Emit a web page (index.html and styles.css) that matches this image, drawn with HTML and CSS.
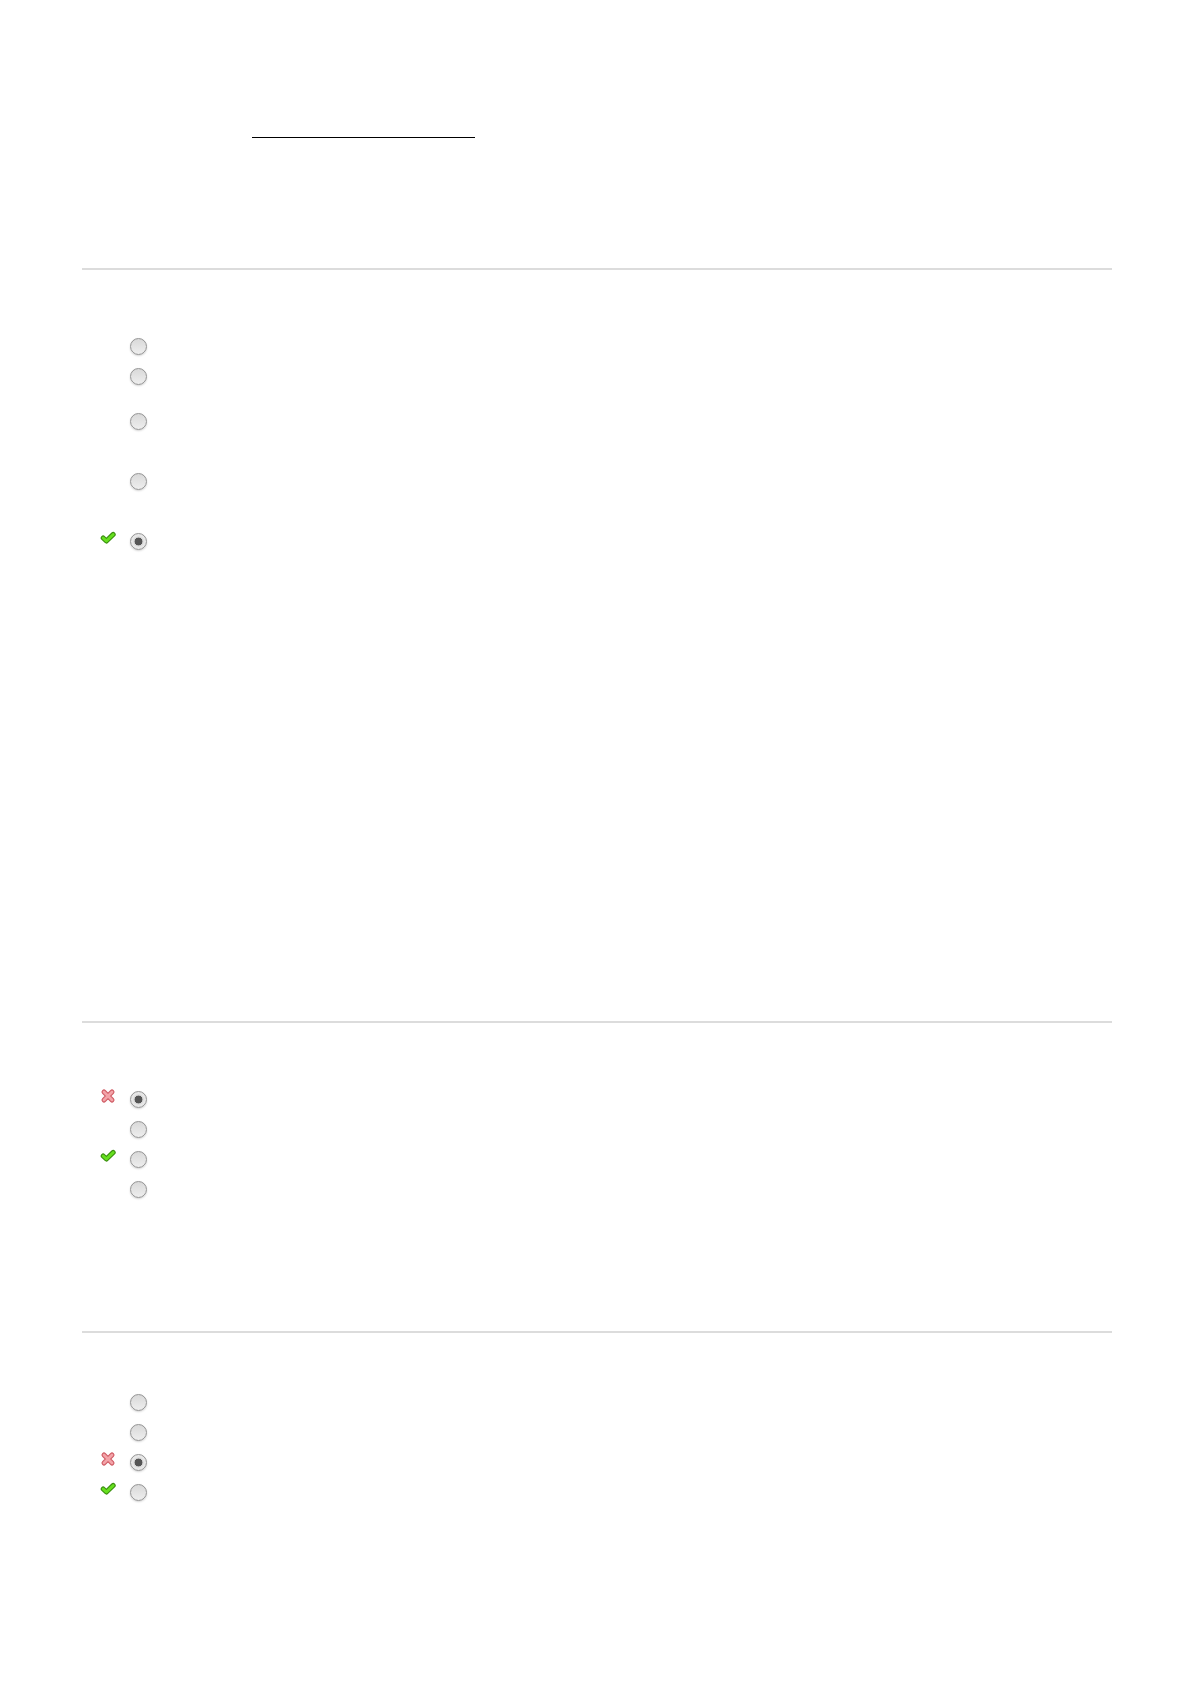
FILE: index.html
```html
<!DOCTYPE html>
<html>
<head>
    <title>Quiz review</title>
    <link rel="stylesheet" href="styles.css">
</head>
<body>
    <div class="page">
        <div class="intro">
            <span class="blank"></span>
        </div>

        <div class="question q1">
            <div class="opt"><span class="mark"></span><input type="radio" name="q1" disabled></div>
            <div class="opt tall"><span class="mark"></span><input type="radio" name="q1" disabled></div>
            <div class="opt taller"><span class="mark"></span><input type="radio" name="q1" disabled></div>
            <div class="opt taller"><span class="mark"></span><input type="radio" name="q1" disabled></div>
            <div class="opt">
                <span class="mark">
                    <svg width="16" height="16" viewBox="0 0 16 16"><path d="M3.2 8 L6.4 11 L13.2 4.4" fill="none" stroke="#3b8f10" stroke-width="5" stroke-linecap="round" stroke-linejoin="round"/><path d="M3.2 8 L6.4 11 L13.2 4.4" fill="none" stroke="#66e01e" stroke-width="2.8" stroke-linecap="round" stroke-linejoin="round"/></svg>
                </span>
                <input type="radio" name="q1" checked disabled>
            </div>
        </div>

        <div class="question q2">
            <div class="opt">
                <span class="mark">
                    <svg width="16" height="16" viewBox="0 0 16 16"><path d="M4 4 L12 12 M12 4 L4 12" fill="none" stroke="#cf5a63" stroke-width="5" stroke-linecap="round"/><path d="M4 4 L12 12 M12 4 L4 12" fill="none" stroke="#f3a3a8" stroke-width="2.8" stroke-linecap="round"/></svg>
                </span>
                <input type="radio" name="q2" checked disabled>
            </div>
            <div class="opt"><span class="mark"></span><input type="radio" name="q2" disabled></div>
            <div class="opt">
                <span class="mark">
                    <svg width="16" height="16" viewBox="0 0 16 16"><path d="M3.2 8 L6.4 11 L13.2 4.4" fill="none" stroke="#3b8f10" stroke-width="5" stroke-linecap="round" stroke-linejoin="round"/><path d="M3.2 8 L6.4 11 L13.2 4.4" fill="none" stroke="#66e01e" stroke-width="2.8" stroke-linecap="round" stroke-linejoin="round"/></svg>
                </span>
                <input type="radio" name="q2" disabled>
            </div>
            <div class="opt"><span class="mark"></span><input type="radio" name="q2" disabled></div>
        </div>

        <div class="question q3">
            <div class="opt"><span class="mark"></span><input type="radio" name="q3" disabled></div>
            <div class="opt"><span class="mark"></span><input type="radio" name="q3" disabled></div>
            <div class="opt">
                <span class="mark">
                    <svg width="16" height="16" viewBox="0 0 16 16"><path d="M4 4 L12 12 M12 4 L4 12" fill="none" stroke="#cf5a63" stroke-width="5" stroke-linecap="round"/><path d="M4 4 L12 12 M12 4 L4 12" fill="none" stroke="#f3a3a8" stroke-width="2.8" stroke-linecap="round"/></svg>
                </span>
                <input type="radio" name="q3" checked disabled>
            </div>
            <div class="opt">
                <span class="mark">
                    <svg width="16" height="16" viewBox="0 0 16 16"><path d="M3.2 8 L6.4 11 L13.2 4.4" fill="none" stroke="#3b8f10" stroke-width="5" stroke-linecap="round" stroke-linejoin="round"/><path d="M3.2 8 L6.4 11 L13.2 4.4" fill="none" stroke="#66e01e" stroke-width="2.8" stroke-linecap="round" stroke-linejoin="round"/></svg>
                </span>
                <input type="radio" name="q3" disabled>
            </div>
        </div>
    </div>
</body>
</html>
```

FILE: styles.css
```css
body {
    font-family: "Liberation Sans", Arial, sans-serif;
    margin: 0;
    background: #fff;
}
.page {
    width: 1030px;
    margin-left: 82px;
}
.intro {
    height: 268px;
    padding-top: 137px;
    box-sizing: border-box;
}
.blank {
    display: block;
    margin-left: 170px;
    width: 223px;
    border-bottom: 1px solid #000;
}
.question {
    border-top: 2px solid #dcdcdc;
    padding-top: 68px;
}
.q1 {
    padding-bottom: 458px;
}
.q2 {
    padding-bottom: 120px;
}
.q3 {
    padding-top: 61px;
    padding-bottom: 160px;
}
.opt {
    display: flex;
    align-items: flex-start;
    height: 30px;
}
.opt.tall {
    height: 45px;
}
.opt.taller {
    height: 60px;
}
.mark {
    width: 16px;
    height: 16px;
    margin-left: 18px;
    margin-top: -3px;
}
.mark svg {
    display: block;
}
input[type="radio"] {
    appearance: none;
    -webkit-appearance: none;
    width: 17px;
    height: 17px;
    margin: 0 0 0 14px;
    border-radius: 50%;
    border: 1px solid #939393;
    background: linear-gradient(#d9d9d9, #eeeeee);
    box-shadow: 0 1px 2px rgba(0, 0, 0, 0.18);
    box-sizing: border-box;
}
input[type="radio"]:checked {
    background: radial-gradient(circle, #555 0, #555 3.6px, #d2d2d2 4.2px, #e6e6e6 5.5px, #eeeeee 100%);
}
```
